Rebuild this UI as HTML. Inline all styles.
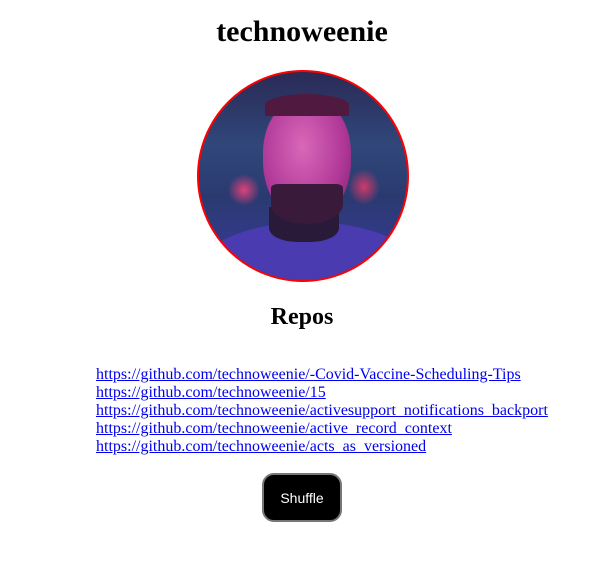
<!DOCTYPE html>
<html><head><meta charset="utf-8"><style>
body{margin:0;background:#fff;font-family:"Liberation Serif",serif;width:589px;height:565px;position:relative;overflow:hidden}
h1{position:absolute;top:14px;left:0;width:604px;text-align:center;margin:0;font-size:30px;font-weight:bold;line-height:36px}
.av{position:absolute;left:197px;top:70px;width:208px;height:208px;border:2px solid #f00;border-radius:50%;overflow:hidden;
background:radial-gradient(ellipse 16px 16px at 45px 118px,#e0407a,transparent),radial-gradient(ellipse 16px 18px at 165px 115px,#d03a6a,transparent),linear-gradient(180deg,#2a2a55 0%,#30477a 35%,#2a3a70 60%,#3a3aa0 100%)}
.body{position:absolute;left:-10px;top:150px;width:240px;height:120px;border-radius:50% 50% 0 0;background:#4a3cb0}
.neck{position:absolute;left:70px;top:135px;width:70px;height:35px;background:#2a1a3a;border-radius:0 0 40% 40%}
.face{position:absolute;left:64px;top:26px;width:88px;height:122px;border-radius:45% 45% 48% 48%;background:radial-gradient(ellipse at 45% 40%,#d868b8,#b03898 60%,#702060)}
.beard{position:absolute;left:72px;top:112px;width:72px;height:40px;border-radius:10% 10% 50% 50%;background:#3a1a3a}
.hair{position:absolute;left:66px;top:22px;width:84px;height:22px;border-radius:50% 50% 0 0;background:#501a40}
h2{position:absolute;top:302px;left:0;width:604px;text-align:center;margin:0;font-size:24px;font-weight:bold;line-height:30px}
.links{position:absolute;left:96px;top:366px;font-size:16px;line-height:18px}
.links a{color:#00e;text-decoration:underline;display:block}
button{position:absolute;left:262px;top:473px;width:80px;height:49px;background:#000;color:#fff;border:2px solid #777;border-radius:12px;font-family:"Liberation Sans",sans-serif;font-size:14px;padding:0}
</style></head><body>
<h1>technoweenie</h1>
<div class="av"><div class="body"></div><div class="neck"></div><div class="face"></div><div class="hair"></div><div class="beard"></div></div>
<h2>Repos</h2>
<div class="links">
<a>https://github.com/technoweenie/-Covid-Vaccine-Scheduling-Tips</a>
<a>https://github.com/technoweenie/15</a>
<a>https://github.com/technoweenie/activesupport_notifications_backport</a>
<a>https://github.com/technoweenie/active_record_context</a>
<a>https://github.com/technoweenie/acts_as_versioned</a>
</div>
<button>Shuffle</button>
</body></html>
